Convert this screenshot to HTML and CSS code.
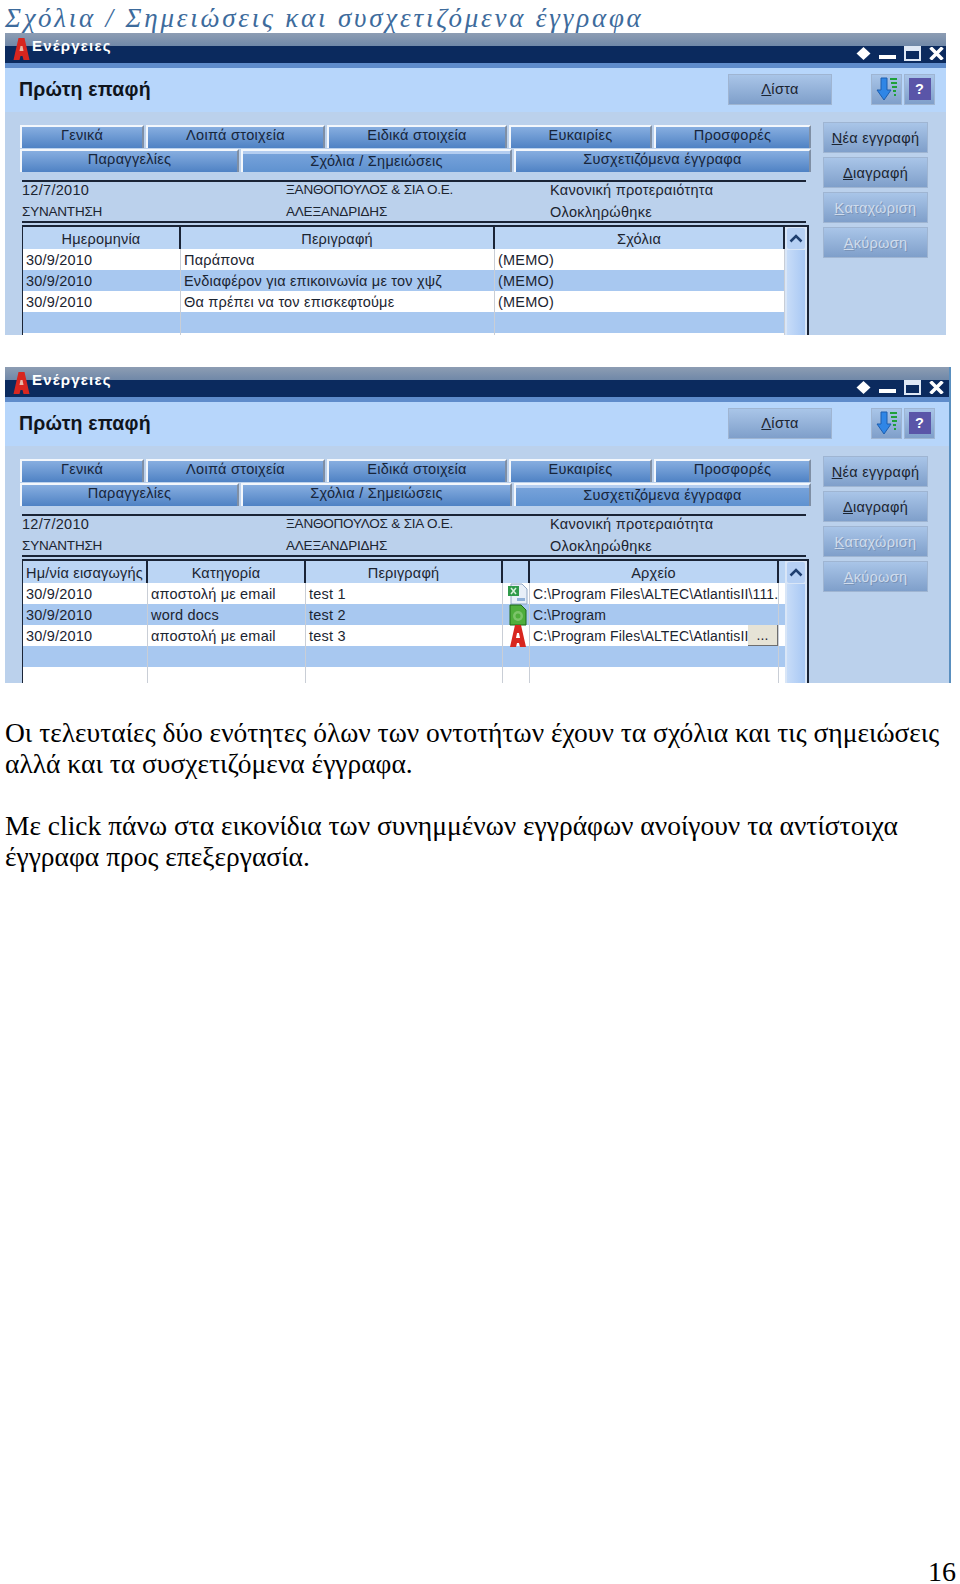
FILE: index.html
```html
<!DOCTYPE html>
<html lang="el">
<head>
  <meta charset="UTF-8" />
  <title>Σχόλια / Σημειώσεις και συσχετιζόμενα έγγραφα</title>
  <link rel="stylesheet" href="styles.css">
</head>
<body>
  <div class="page">
    <h2 class="section-title">Σχόλια / Σημειώσεις και συσχετιζόμενα έγγραφα</h2>

    <!-- Πρώτο παράθυρο: σχόλια -->
    <div class="window window-notes">
      <div class="titlebar">
        <svg class="logo" viewBox="0 0 16 22"><path d="M5 0h6l5 22h-6l-1-4H7l-1 4H0z" fill="#d8261f"/><path d="M7 8h2l1 5H6z" fill="#e9b9a8"/></svg>
        <span class="titlebar-text">Ενέργειες</span>
        <div class="window-controls">
          <svg width="15" height="13" viewBox="0 0 15 13"><path d="M7.5 0l7 6.5-7 6.500-7-6.500z" fill="#fff"/></svg>
          <svg width="17" height="13" viewBox="0 0 17 13"><rect y="8" width="17" height="4" fill="#fff"/></svg>
          <svg width="17" height="15" viewBox="0 0 17 15"><rect x="1" y="1" width="15" height="13" fill="none" stroke="#dfe8f5" stroke-width="2"/><rect x="1" y="1" width="15" height="4" fill="#dfe8f5"/></svg>
          <svg width="15" height="13" viewBox="0 0 15 13"><path d="M1.500 0.500l12 12M13.500 0.500l-12 12" stroke="#fff" stroke-width="3.500"/></svg>
        </div>
      </div>
      <div class="head">
        <div class="head-title">Πρώτη επαφή</div>
        <button class="btn btn-list"><u>Λ</u>ίστα</button>
        <button class="btn btn-icon">
          <svg width="24" height="24" viewBox="0 0 24 24"><path d="M6 1h6v12h4l-7 10-7-10h4z" fill="#2f86e6" stroke="#1d5fb0"/><path d="M15 2h7M16 6h6M17 10h5M18 14h3M19 18h2" stroke="#1fa03a" stroke-width="2"/></svg>
        </button>
        <button class="btn btn-icon">
          <span class="help-icon">?</span>
        </button>
      </div>
      <div class="content">
        <div class="form-area">
          <div class="tabs">
            <div class="tab-row">
              <div class="tab tab-w1">Γενικά</div>
              <div class="tab tab-w2">Λοιπά στοιχεία</div>
              <div class="tab tab-w3">Ειδικά στοιχεία</div>
              <div class="tab tab-w4">Ευκαιρίες</div>
              <div class="tab tab-w5">Προσφορές</div>
            </div>
            <div class="tab-row">
              <div class="tab tab-a">Παραγγελίες</div>
              <div class="tab tab-b active">Σχόλια / Σημειώσεις</div>
              <div class="tab tab-c">Συσχετιζόμενα έγγραφα</div>
            </div>
          </div>
          <div class="info">
            <span>12/7/2010</span><span class="caps">ΞΑΝΘΟΠΟΥΛΟΣ &amp; ΣΙΑ Ο.Ε.</span><span>Κανονική προτεραιότητα</span>
            <span class="caps">ΣΥΝΑΝΤΗΣΗ</span><span class="caps">ΑΛΕΞΑΝΔΡΙΔΗΣ</span><span>Ολοκληρώθηκε</span>
          </div>
          <div class="grid-wrap">
            <div class="grid">
              <div class="grid-row grid-head">
                <div>Ημερομηνία</div><div>Περιγραφή</div><div>Σχόλια</div>
              </div>
              <div class="grid-row">
                <div>30/9/2010</div><div>Παράπονα</div><div>(MEMO)</div>
              </div>
              <div class="grid-row alt">
                <div>30/9/2010</div><div>Ενδιαφέρον για επικοινωνία με τον χψζ</div><div>(MEMO)</div>
              </div>
              <div class="grid-row">
                <div>30/9/2010</div><div>Θα πρέπει να τον επισκεφτούμε</div><div>(MEMO)</div>
              </div>
              <div class="grid-row alt"><div></div><div></div><div></div></div>
              <div class="grid-row"><div></div><div></div><div></div></div>
            </div>
            <div class="scrollbar">
              <div class="scroll-up"><svg width="14" height="9" viewBox="0 0 14 9"><path d="M1.500 7.500L7 2l5.500 5.500" fill="none" stroke="#1f3f70" stroke-width="2.500"/></svg></div>
              <div class="scroll-thumb"></div>
            </div>
          </div>
        </div>
        <div class="side">
          <button class="btn btn-side"><u>Ν</u>έα εγγραφή</button>
          <button class="btn btn-side"><u>Δ</u>ιαγραφή</button>
          <button class="btn btn-side disabled"><u>Κ</u>αταχώριση</button>
          <button class="btn btn-side disabled"><u>Α</u>κύρωση</button>
        </div>
      </div>
    </div>

    <!-- Δεύτερο παράθυρο: συσχετιζόμενα έγγραφα -->
    <div class="window window-docs">
      <div class="titlebar">
        <svg class="logo" viewBox="0 0 16 22"><path d="M5 0h6l5 22h-6l-1-4H7l-1 4H0z" fill="#d8261f"/><path d="M7 8h2l1 5H6z" fill="#e9b9a8"/></svg>
        <span class="titlebar-text">Ενέργειες</span>
        <div class="window-controls">
          <svg width="15" height="13" viewBox="0 0 15 13"><path d="M7.5 0l7 6.5-7 6.500-7-6.500z" fill="#fff"/></svg>
          <svg width="17" height="13" viewBox="0 0 17 13"><rect y="8" width="17" height="4" fill="#fff"/></svg>
          <svg width="17" height="15" viewBox="0 0 17 15"><rect x="1" y="1" width="15" height="13" fill="none" stroke="#dfe8f5" stroke-width="2"/><rect x="1" y="1" width="15" height="4" fill="#dfe8f5"/></svg>
          <svg width="15" height="13" viewBox="0 0 15 13"><path d="M1.500 0.500l12 12M13.500 0.500l-12 12" stroke="#fff" stroke-width="3.500"/></svg>
        </div>
      </div>
      <div class="head">
        <div class="head-title">Πρώτη επαφή</div>
        <button class="btn btn-list"><u>Λ</u>ίστα</button>
        <button class="btn btn-icon">
          <svg width="24" height="24" viewBox="0 0 24 24"><path d="M6 1h6v12h4l-7 10-7-10h4z" fill="#2f86e6" stroke="#1d5fb0"/><path d="M15 2h7M16 6h6M17 10h5M18 14h3M19 18h2" stroke="#1fa03a" stroke-width="2"/></svg>
        </button>
        <button class="btn btn-icon">
          <span class="help-icon">?</span>
        </button>
      </div>
      <div class="content">
        <div class="form-area">
          <div class="tabs">
            <div class="tab-row">
              <div class="tab tab-w1">Γενικά</div>
              <div class="tab tab-w2">Λοιπά στοιχεία</div>
              <div class="tab tab-w3">Ειδικά στοιχεία</div>
              <div class="tab tab-w4">Ευκαιρίες</div>
              <div class="tab tab-w5">Προσφορές</div>
            </div>
            <div class="tab-row">
              <div class="tab tab-a">Παραγγελίες</div>
              <div class="tab tab-b">Σχόλια / Σημειώσεις</div>
              <div class="tab tab-c active">Συσχετιζόμενα έγγραφα</div>
            </div>
          </div>
          <div class="info">
            <span>12/7/2010</span><span class="caps">ΞΑΝΘΟΠΟΥΛΟΣ &amp; ΣΙΑ Ο.Ε.</span><span>Κανονική προτεραιότητα</span>
            <span class="caps">ΣΥΝΑΝΤΗΣΗ</span><span class="caps">ΑΛΕΞΑΝΔΡΙΔΗΣ</span><span>Ολοκληρώθηκε</span>
          </div>
          <div class="grid-wrap">
            <div class="grid">
              <div class="grid-row grid-head">
                <div>Ημ/νία εισαγωγής</div><div>Κατηγορία</div><div>Περιγραφή</div><div></div><div>Αρχείο</div>
              </div>
              <div class="grid-row">
                <div>30/9/2010</div><div>αποστολή με email</div><div>test 1</div>
                <div class="cell-icon">
                  <svg width="22" height="22" viewBox="0 0 22 22"><path d="M4 1h11l5 5v15H4z" fill="#e8eff8" stroke="#8fa6c4"/><rect x="1" y="3" width="11" height="10" fill="#2f9a4a"/><path d="M4 5l5 6M9 5l-5 6" stroke="#d9f0dd" stroke-width="1.500"/><rect x="10" y="15" width="8" height="3" fill="#8fb0d8"/></svg>
                </div>
                <div class="cell-path">C:\Program Files\ALTEC\AtlantisII\111.</div>
              </div>
              <div class="grid-row alt">
                <div>30/9/2010</div><div>word docs</div><div>test 2</div>
                <div class="cell-icon">
                  <svg width="18" height="22" viewBox="0 0 18 22"><path d="M1 1h11l5 5v15H1z" fill="#4fae3c" stroke="#1f6a18"/><circle cx="9" cy="12" r="5" fill="#7cc46a"/><circle cx="9" cy="12" r="2.500" fill="#4fae3c"/></svg>
                </div>
                <div class="cell-path">C:\Program</div>
              </div>
              <div class="grid-row">
                <div>30/9/2010</div><div>αποστολή με email</div><div>test 3</div>
                <div class="cell-icon">
                  <svg width="20" height="22" viewBox="0 0 16 22"><path d="M5 0h6l5 22h-6l-1-4H7l-1 4H0z" fill="#d8261f"/><path d="M7 8h2l1 5H6z" fill="#fff"/></svg>
                </div>
                <div class="cell-path cell-file">
                  <span>C:\Program Files\ALTEC\AtlantisII\</span>
                  <span class="file-btn">...</span>
                </div>
              </div>
              <div class="grid-row alt"><div></div><div></div><div></div><div></div><div></div></div>
              <div class="grid-row"><div></div><div></div><div></div><div></div><div></div></div>
            </div>
            <div class="scrollbar">
              <div class="scroll-up"><svg width="14" height="9" viewBox="0 0 14 9"><path d="M1.500 7.500L7 2l5.500 5.500" fill="none" stroke="#1f3f70" stroke-width="2.500"/></svg></div>
              <div class="scroll-thumb"></div>
            </div>
          </div>
        </div>
        <div class="side">
          <button class="btn btn-side"><u>Ν</u>έα εγγραφή</button>
          <button class="btn btn-side"><u>Δ</u>ιαγραφή</button>
          <button class="btn btn-side disabled"><u>Κ</u>αταχώριση</button>
          <button class="btn btn-side disabled"><u>Α</u>κύρωση</button>
        </div>
      </div>
    </div>

    <div class="text">
      <p>Οι τελευταίες δύο ενότητες όλων των οντοτήτων έχουν τα σχόλια και τις σημειώσεις αλλά και τα συσχετιζόμενα έγγραφα.</p>
      <p>Με click πάνω στα εικονίδια των συνημμένων εγγράφων ανοίγουν τα αντίστοιχα έγγραφα προς επεξεργασία.</p>
    </div>

    <div class="page-number">16</div>
  </div>
</body>
</html>
```

FILE: styles.css
```css
/* Σελίδα */
body {
  margin: 0;
  padding: 0;
  background-color: #FFFFFF;
  font-family: "Liberation Serif", serif;
}

.page {
  display: flex;
  flex-direction: column;
  height: 1584px;
  padding-left: 5px;
  box-sizing: border-box;
  overflow: hidden;
}

.section-title {
  margin: 0;
  height: 33px;
  font-size: 27px;
  line-height: 36px;
  font-weight: 400;
  font-style: italic;
  letter-spacing: 2.8px;
  color: #3d6b9c;
  white-space: nowrap;
}

/* Παράθυρο εφαρμογής */
.window {
  width: 941px;
  height: 302px;
  overflow: hidden;
  background-color: #BBD1EC;
  font-family: "Liberation Sans", sans-serif;
  font-size: 14px;
  color: #1b2430;
}
.window-docs {
  width: 946px;
  height: 316px;
  margin-top: 32px;
  border-right: 2px solid #5a8fbf;
  box-sizing: border-box;
}
.window-docs .content {
  height: 204px;
}
.window-docs .head {
  padding-right: 14px;
}
.window-docs .window-controls {
  padding-right: 5px;
}

.titlebar {
  display: flex;
  align-items: center;
  height: 35px;
  padding: 13px 0 5px 8px;
  box-sizing: border-box;
  background: linear-gradient(#8d9db3 0, #7088a8 13px, #0b2a5e 13px, #0b2a5e 30px, #5f8ccb 30px);
  position: relative;
}
.logo {
  position: absolute;
  left: 8px;
  top: 5px;
  width: 17px;
  height: 22px;
}
.titlebar-text {
  position: absolute;
  left: 27px;
  top: 4px;
  font-size: 15px;
  font-weight: 700;
  letter-spacing: 1.200px;
  color: #FFFFFF;
}
.window-controls {
  display: flex;
  align-items: center;
  gap: 8px;
  margin-left: auto;
  padding-right: 2px;
  margin-top: -3px;
}

.head {
  display: flex;
  align-items: center;
  height: 44px;
  padding: 0 11px 2px 14px;
  box-sizing: border-box;
  background-color: #B7D6FB;
}
.head-title {
  margin-right: auto;
  font-size: 19.500px;
  font-weight: 700;
  letter-spacing: 0.2px;
  color: #10151c;
}

/* Κουμπιά */
.btn {
  padding: 0;
  border: 1px solid #9fb5d2;
  background: linear-gradient(#a9c5e8, #7f9fca);
  font-family: "Liberation Sans", sans-serif;
  font-size: 14.500px;
  letter-spacing: 0.3px;
  color: #1b2430;
}
.btn-list {
  width: 104px;
  height: 31px;
  margin-right: 37px;
}
.btn-icon {
  display: flex;
  align-items: center;
  justify-content: center;
  width: 31px;
  height: 31px;
  margin-left: 2px;
}
.help-icon {
  display: block;
  width: 22px;
  height: 22px;
  background-color: #5a55a8;
  color: #FFFFFF;
  font-weight: 700;
  line-height: 22px;
  text-align: center;
}

.content {
  display: flex;
  height: 190px;
  padding: 13px 0 0 15px;
  box-sizing: border-box;
}
.form-area {
  width: 788px;
  flex: none;
}

/* Καρτέλες */
.tabs {
  display: flex;
  flex-direction: column;
  gap: 1px;
}
.tab-row {
  display: flex;
  gap: 2px;
  height: 23px;
}
.tab {
  flex: none;
  border-top: 2px solid #F3F7FC;
  border-left: 2px solid #F3F7FC;
  border-right: 2px solid #7f8fa5;
  background: linear-gradient(#87aee0, #4f82c4);
  box-sizing: border-box;
  font-size: 14.500px;
  letter-spacing: 0.3px;
  line-height: 17px;
  text-align: center;
  color: #17253a;
}
.tab.active {
  background: linear-gradient(#b3cdf0 0, #b3cdf0 3px, #76a2da 3px, #5f92d0);
  line-height: 21px;
}
.tab-w1 { width: 124px; }
.tab-w2 { width: 179px; }
.tab-w3 { width: 180px; }
.tab-w4 { width: 143px; }
.tab-w5 { width: 157px; }
.tab-a { width: 219px; }
.tab-b { width: 271px; }
.tab-c { width: 297px; }

/* Στοιχεία επαφής */
.info {
  display: grid;
  grid-template-columns: 264px 264px 1fr;
  grid-auto-rows: 22px;
  align-items: start;
  width: 784px;
  height: 43px;
  margin: 8px 0 0 2px;
  border-top: 2px solid #1a2436;
  border-bottom: 2px solid #1a2436;
  box-sizing: border-box;
  letter-spacing: 0.3px;
  font-size: 14.500px;
  line-height: 16px;
}
.info .caps {
  font-size: 13.500px;
  letter-spacing: -0.2px;
}

/* Πίνακας */
.grid-wrap {
  display: flex;
  width: 787px;
  margin: 2px 0 0 2px;
  border-top: 2px solid #1a2436;
  border-left: 1px solid #1a2436;
  border-right: 2px solid #1a2436;
  box-sizing: border-box;
}
.grid {
  width: 762px;
  flex: none;
}
.grid-row {
  display: grid;
  height: 21px;
  background-color: #FFFFFF;
  line-height: 23px;
  font-size: 14.500px;
  letter-spacing: 0.2px;
  white-space: nowrap;
}
.grid-row > div {
  padding-left: 3px;
  border-right: 1px solid #c9ced6;
  overflow: hidden;
}
.grid-row.alt {
  background-color: #A8C8F0;
}
.grid-row.grid-head {
  height: 22px;
  line-height: 25px;
  background-color: #BBD5F4;
  text-align: center;
}
.grid-head > div {
  padding-left: 0;
  border-right: 2px solid #1a2436;
}
.window-notes .grid-row {
  grid-template-columns: 158px 314px 290px;
}
.window-docs .grid-row {
  grid-template-columns: 125px 158px 197px 27px 249px;
}
.cell-icon {
  display: flex;
  align-items: center;
  justify-content: center;
  overflow: visible !important;
}
.cell-path {
  font-size: 14px;
  letter-spacing: 0.15px;
}
.cell-file {
  display: flex;
  position: relative;
}
.file-btn {
  position: absolute;
  right: 0;
  top: 0;
  width: 29px;
  height: 20px;
  line-height: 20px;
  background-color: #E6E3D6;
  border-right: 1px solid #6e6e6e;
  border-bottom: 1px solid #6e6e6e;
  text-align: center;
}

.scrollbar {
  flex: 1;
  padding-top: 1px;
  background-color: #D9E6F7;
}
.scroll-up {
  display: flex;
  align-items: center;
  justify-content: center;
  height: 21px;
  margin: 0 2px 1px;
  border-radius: 2px;
  background-color: #B6D0F4;
}
.scroll-thumb {
  height: 200px;
  margin: 0 2px;
  background: linear-gradient(90deg, #c7dcf8, #a8c8f4);
}

/* Δεξιά κουμπιά */
.side {
  display: flex;
  flex-direction: column;
  gap: 4px;
  margin: -3px 0 0 15px;
}
.btn-side {
  width: 105px;
  height: 31px;
}
.btn-side.disabled {
  color: #d0dcec;
  text-shadow: 1px 1px 0 #7a94b8;
}

/* Κείμενο */
.text {
  margin-top: 34px;
  width: 945px;
  font-size: 27.500px;
  line-height: 31px;
  color: #000000;
}
.text p {
  margin: 0 0 31px;
}

.page-number {
  margin-top: auto;
  padding-right: 4px;
  text-align: right;
  font-size: 28px;
  line-height: 24px;
  color: #000000;
}
```
